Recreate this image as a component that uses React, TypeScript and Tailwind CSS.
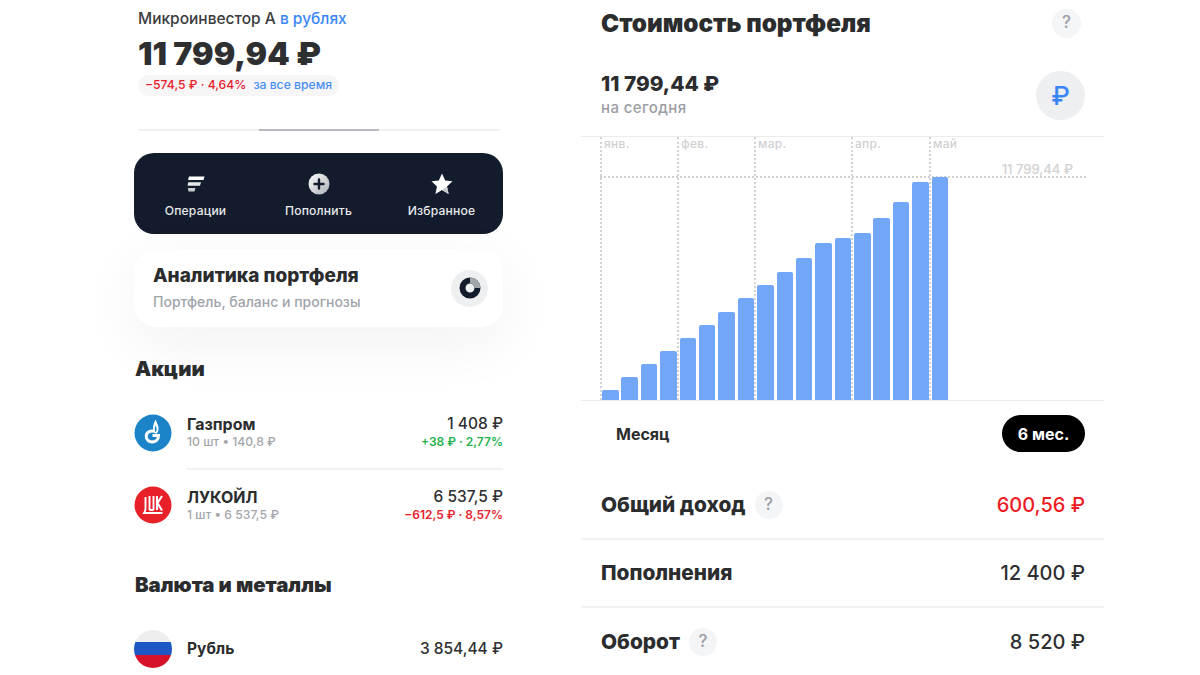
import React from 'react';

const barHeights = [10, 23, 36, 49, 62, 75, 88, 102, 115, 128, 142, 157, 162, 167, 182, 198, 218, 223];

const months = [
  { label: 'янв.', left: 'left-[19px]' },
  { label: 'фев.', left: 'left-[96px]' },
  { label: 'мар.', left: 'left-[173px]' },
  { label: 'апр.', left: 'left-[270px]' },
  { label: 'май', left: 'left-[348px]' },
];

const Help: React.FC<{ size?: string }> = ({ size = 'w-[28px] h-[28px]' }) => (
  <div className={`${size} rounded-full bg-[#f4f5f6] flex items-center justify-center text-[17px] font-medium text-[#9a9ea5]`}>?</div>
);

const GazpromLogo = () => (
  <svg viewBox="0 0 38 38" className="w-[38px] h-[38px]">
    <circle cx="19" cy="19" r="18.5" fill="#1b83c8" />
    <path d="M21.500 5.500c-1.700 3.500-2.500 6-2.500 8.800 0 2.200.8 4 2 5.200h1.700c1.300-1.200 2-3 1.900-5.200-.2-3-1.700-5.800-3.100-8.800z" fill="#fff" />
    <path d="M21.700 11.500c-.7 1.500-1 2.700-1 4 0 1.100.4 2 1 2.700.6-.7.9-1.600.9-2.700 0-1.300-.4-2.500-.9-4z" fill="#1b83c8" />
    <path d="M20.500 17.300c-4.700-1.200-8.300 1.300-8.300 5 0 3.400 2.600 5.600 5.900 5.600 3.800 0 6.400-2.500 6.400-6.400h-6" fill="none" stroke="#fff" strokeWidth="3" />
  </svg>
);

const LukoilLogo = () => (
  <svg viewBox="0 0 38 38" className="w-[38px] h-[38px]">
    <circle cx="19" cy="19" r="18.500" fill="#e8202a" />
    <path d="M11.500 11v11.500c0 2-.6 3.200-1.500 4.500h18.500" fill="none" stroke="#fff" strokeWidth="1.900" />
    <path d="M15.500 10v14M19.500 10v14M15.500 24h4" fill="none" stroke="#fff" strokeWidth="1.900" />
    <path d="M23 10v14M28 10l-4.500 7 4.500 7.500" fill="none" stroke="#fff" strokeWidth="2.100" />
  </svg>
);

const PlusIcon = () => (
  <svg viewBox="0 0 22 22" className="w-[22px] h-[22px]">
    <defs>
      <linearGradient id="plusFill" x1="0" y1="0" x2="1" y2="1">
        <stop offset="0" stopColor="#ffffff" />
        <stop offset="1" stopColor="#a9adb3" />
      </linearGradient>
    </defs>
    <circle cx="11" cy="11" r="10.500" fill="url(#plusFill)" />
    <path d="M11 6.500v9M6.500 11h9" stroke="#121c2c" strokeWidth="2.400" strokeLinecap="round" />
  </svg>
);

const OpsIcon = () => (
  <svg viewBox="0 0 18 16" className="w-[18px] h-[16px]">
    <path d="M2 0.500h15.500l-1 3.500H1z" fill="#fff" />
    <path d="M1.300 6.300h12.700l-1 3.500H.5z" fill="#e9eaec" />
    <path d="M.9 12h7.600l-1 3.500H1.500z" fill="#c9ccd0" />
  </svg>
);

const StarIcon = () => (
  <svg viewBox="0 0 22 22" className="w-[22px] h-[22px]">
    <polygon points="11,0.500 14.200,7.600 21.500,8.300 16,13.400 17.600,21 11,17 4.400,21 6,13.400 0.500,8.300 7.800,7.600" fill="#fff" />
    <polygon points="11,17 17.600,21 16,13.400" fill="#c9ccd0" />
  </svg>
);

const DonutIcon = () => (
  <svg viewBox="0 0 22 22" className="w-[22px] h-[22px]">
    <circle cx="11" cy="11" r="7.500" fill="none" stroke="#121c2c" strokeWidth="6" />
    <path d="M11 3.500a7.500 7.500 0 0 1 7.500 7.500" fill="none" stroke="#a2a7aa" strokeWidth="6" />
  </svg>
);

const NavItem: React.FC<{ icon: React.ReactNode; label: string }> = ({ icon, label }) => (
  <div className="flex flex-col items-center w-[123px]">
    <div className="h-[22px] flex items-center justify-center">{icon}</div>
    <span className="mt-[7px] text-[12.100px] leading-[18px] font-medium tracking-[0.2px] text-[#e8e9eb]">{label}</span>
  </div>
);

const StockRow: React.FC<{
  logo: React.ReactNode;
  name: string;
  sub: string;
  price: string;
  change: string;
  changeColor: string;
  nameNudge: string;
  priceNudge: string;
}> = ({ logo, name, sub, price, change, changeColor, nameNudge, priceNudge }) => (
  <div className="flex items-center h-[38px]">
    {logo}
    <div className={`ml-[15px] flex-1 ${nameNudge}`}>
      <div className="text-[16px] leading-[20px] font-bold text-[#2b2c2e]">{name}</div>
      <div className="text-[12.200px] leading-[16px] font-medium text-[#a3a6ab]">{sub}</div>
    </div>
    <div className={`text-right ${priceNudge}`}>
      <div className="text-[15.500px] leading-[20px] font-medium text-[#2e2f31]">{price}</div>
      <div className={`text-[12px] leading-[16px] font-semibold ${changeColor}`}>{change}</div>
    </div>
  </div>
);

const SummaryRow: React.FC<{ label: string; value: string; help?: boolean; valueColor?: string; border?: boolean }> = ({
  label,
  value,
  help,
  valueColor = 'text-[#2e2f31]',
  border,
}) => (
  <div className={`h-[68px] flex items-center pl-[20px] ${border ? 'border-b-2 border-[#f1f2f3]' : ''}`}>
    <span className="text-[20.800px] font-extrabold text-[#2b2c2e]">{label}</span>
    {help && (
      <div className="ml-[9px]">
        <Help />
      </div>
    )}
    <span className={`ml-auto mr-[19px] text-[20px] font-medium ${valueColor}`}>{value}</span>
  </div>
);

export default function App() {
  return (
    <div className="w-[1200px] h-[675px] overflow-hidden bg-white flex pl-[134px] font-['Inter','Liberation_Sans',sans-serif]">
      {/* left phone */}
      <div className="w-[369px] shrink-0">
        <div className="pl-[4px] pt-[9px]">
          <div className="text-[15.500px] leading-[20px] font-medium text-[#3a3b3d]">
            Микроинвестор А <span className="text-[#3b86f7]">в рублях</span>
          </div>
          <div className="mt-[5px] text-[32px] leading-[40px] font-black text-[#2e2f31]">11 799,94 ₽</div>
          <div className="mt-[1px] w-[201px] h-[21px] rounded-full bg-[#f6f6f7] flex items-center justify-center text-[12.200px] font-medium">
            <span className="text-[#e8222e]">−574,5 ₽ · 4,64%</span>
            <span className="ml-[7px] text-[#4b8ff2]">за все время</span>
          </div>
          <div className="mt-[33px] mr-[3px] h-[2px] bg-[#f0f1f2] flex justify-center">
            <div className="w-[120px] h-[2px] bg-[#b8babf]" />
          </div>
        </div>

        <div className="mt-[22px] h-[81px] rounded-[20px] bg-[#121c2c] flex items-center justify-center pt-[5px]">
          <NavItem icon={<OpsIcon />} label="Операции" />
          <NavItem icon={<PlusIcon />} label="Пополнить" />
          <NavItem icon={<StarIcon />} label="Избранное" />
        </div>

        <div className="mt-[15px] h-[78px] rounded-[22px] bg-white shadow-[0_16px_60px_rgba(30,35,50,0.06)] flex items-center pl-[19px] pr-[15px]">
          <div className="flex-1 pb-[2px]">
            <div className="text-[19px] leading-[24px] font-extrabold text-[#2b2c2e]">Аналитика портфеля</div>
            <div className="mt-[5px] text-[14px] leading-[18px] font-medium text-[#a0a3a9]">Портфель, баланс и прогнозы</div>
          </div>
          <div className="w-[37px] h-[37px] rounded-full bg-[#eeeff1] flex items-center justify-center">
            <DonutIcon />
          </div>
        </div>

        <div className="mt-[29px] pl-[1px] text-[20.400px] leading-[26px] font-black text-[#2b2c2e]">Акции</div>

        <div className="mt-[32px]">
          <StockRow
            logo={<GazpromLogo />}
            name="Газпром"
            sub="10 шт • 140,8 ₽"
            price="1 408 ₽"
            change="+38 ₽ · 2,77%"
            changeColor="text-[#22b14c]"
            nameNudge="pb-[3px]"
            priceNudge="pb-[3px]"
          />
          <div className="ml-[52px] mt-[16px] h-[2px] bg-[#f1f2f3]" />
          <div className="mt-[16px]">
            <StockRow
              logo={<LukoilLogo />}
              name="ЛУКОЙЛ"
              sub="1 шт • 6 537,5 ₽"
              price="6 537,5 ₽"
              change="−612,5 ₽ · 8,57%"
              changeColor="text-[#e8222e]"
              nameNudge="pb-[1px]"
              priceNudge=""
            />
          </div>
        </div>

        <div className="mt-[48px] pl-[1px] text-[20.400px] leading-[26px] font-black text-[#2b2c2e]">Валюта и металлы</div>

        <div className="mt-[32px] flex items-center h-[38px]">
          <div className="w-[38px] h-[38px] rounded-full overflow-hidden flex flex-col">
            <div className="h-[12px] bg-[#eeeeef]" />
            <div className="h-[13px] bg-[#1c57c4]" />
            <div className="h-[13px] bg-[#d6122a]" />
          </div>
          <div className="ml-[15px] flex-1 text-[15.500px] font-bold text-[#2b2c2e]">Рубль</div>
          <div className="text-[15.500px] font-medium text-[#2e2f31]">3 854,44 ₽</div>
        </div>
      </div>

      {/* right phone */}
      <div className="ml-[78px] w-[523px] shrink-0">
        <div className="h-[46px] pl-[20px] pr-[23px] flex items-center">
          <span className="flex-1 text-[24.300px] font-black text-[#2b2c2e]">Стоимость портфеля</span>
          <Help size="w-[29px] h-[29px]" />
        </div>

        <div className="mt-[25px] h-[49px] pl-[20px] pr-[19px] flex items-center">
          <div className="flex-1 pb-[2px]">
            <div className="text-[20.800px] leading-[26px] font-extrabold text-[#2b2c2e]">11 799,44 ₽</div>
            <div className="text-[15px] leading-[22px] font-medium tracking-[0.4px] text-[#9a9da3]">на сегодня</div>
          </div>
          <div className="w-[49px] h-[49px] rounded-full bg-[#eeeff0] flex items-center justify-center text-[26px] font-medium text-[#3b86f7]">₽</div>
        </div>

        <div className="relative mt-[16px] h-[265px] border-y border-[#ececed]">
          {months.map((m) => (
            <div key={m.label} className={`absolute top-0 bottom-0 ${m.left} border-l-2 border-dotted border-[#d2d3d5]`}>
              <span className="absolute left-[2px] top-[-1px] leading-[16px] text-[12px] font-medium tracking-[0.3px] text-[#cfd0d2]">{m.label}</span>
            </div>
          ))}
          <div className="absolute left-[19px] w-[486px] top-[39px] border-t-2 border-dotted border-[#cfd0d2]" />
          <span className="absolute right-[31px] top-[24px] leading-[16px] text-[13px] font-medium text-[#d0d1d3]">11 799,44 ₽</span>
          <div className="absolute left-[21px] bottom-0 flex items-end gap-[2.900px]">
            {barHeights.map((h, i) => (
              <div key={i} className="w-[16.500px] rounded-t-[2px] bg-[#72a7f8]" style={{ height: h }} />
            ))}
          </div>
        </div>

        <div className="mt-[14px] h-[37px] pl-[35px] pr-[19px] flex items-center justify-between">
          <span className="text-[16px] font-bold text-[#2b2c2e]">Месяц</span>
          <div className="w-[83px] h-[37px] rounded-full bg-black flex items-center justify-center text-[16px] font-bold text-white">6 мес.</div>
        </div>

        <div className="mt-[20px]">
          <SummaryRow label="Общий доход" value="600,56 ₽" help valueColor="text-[#ed1c24]" border />
          <SummaryRow label="Пополнения" value="12 400 ₽" border />
          <SummaryRow label="Оборот" value="8 520 ₽" help />
        </div>
      </div>
    </div>
  );
}
